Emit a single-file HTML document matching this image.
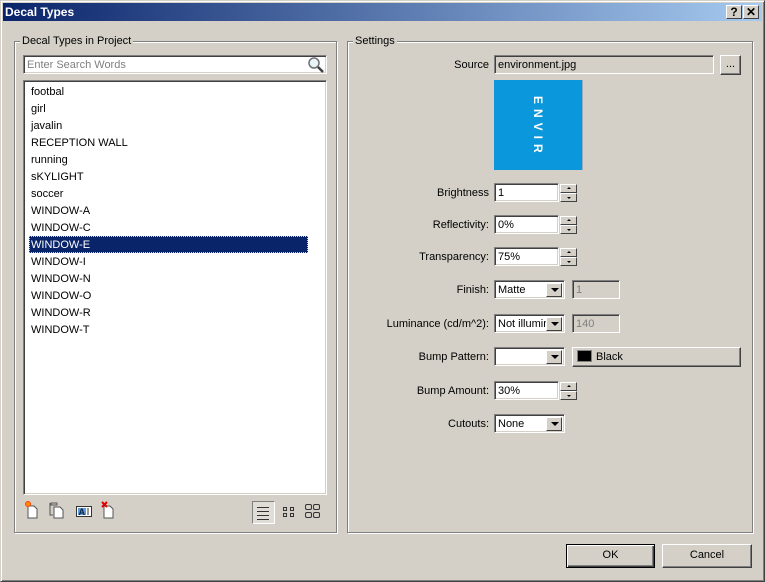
<!DOCTYPE html>
<html><head><style>
*{box-sizing:border-box;margin:0;padding:0}
body{width:765px;height:582px;background:#d4d0c8;font-family:"Liberation Sans",sans-serif;font-size:11px;color:#000;position:relative;overflow:hidden}
.a{position:absolute}
.win{left:0;top:0;width:765px;height:582px;border:1px solid;border-color:#d4d0c8 #404040 #404040 #d4d0c8;box-shadow:inset 1px 1px 0 #fff,inset -1px -1px 0 #808080}
.title{left:3px;top:3px;width:759px;height:18px;background:linear-gradient(to right,#0a246a,#a6caf0);color:#fff;font-weight:bold;font-size:12px;line-height:18px;padding-left:2px}
.tb{width:16px;height:14px;top:5px;background:#d4d0c8;border:1px solid;border-color:#fff #404040 #404040 #fff;font-weight:bold;font-size:12px;line-height:12px;text-align:center;color:#000}
.grp{border:1px solid #808080;box-shadow:1px 1px 0 #fff,inset 1px 1px 0 #fff}
.lbl{background:#d4d0c8;padding:0 2px;line-height:12px}
.sunk{background:#fff;border:1px solid;border-color:#808080 #fff #fff #808080;box-shadow:inset 1px 1px 0 #404040,inset -1px -1px 0 #d4d0c8}
.dis{background:#d4d0c8;color:#808080}
.r{text-align:right;width:200px;line-height:14px}
.txt{line-height:18px;padding-left:3px}
.spin{width:17px;height:18px}
.spin div{width:17px;height:9px;background:#d4d0c8;border:1px solid;border-color:#fff #404040 #404040 #fff;position:relative}
.arr{position:absolute;left:6px;width:0;height:0;border-left:2px solid transparent;border-right:2px solid transparent}
.dd{position:absolute;right:2px;top:2px;width:16px;height:14px;background:#d4d0c8;border:1px solid;border-color:#fff #404040 #404040 #fff}
.dd:after{content:"";position:absolute;left:4px;top:4px;border-left:4px solid transparent;border-right:4px solid transparent;border-top:4px solid #000}
.btn{background:#d4d0c8;border:1px solid;border-color:#fff #404040 #404040 #fff;box-shadow:inset -1px -1px 0 #808080;text-align:center;line-height:21px}
.li{left:31px;line-height:17px}
</style></head><body>
<div class="a win"></div>
<div class="a title">Decal Types</div>
<div class="a tb" style="left:726px">?</div>
<div class="a tb" style="left:743px">✕</div>

<div class="a grp" style="left:14px;top:41px;width:323px;height:492px"></div>
<div class="a lbl" style="left:20px;top:35px">Decal Types in Project</div>
<div class="a sunk" style="left:23px;top:55px;width:304px;height:19px;color:#808080;padding-left:3px;line-height:18px">Enter Search Words</div>
<svg class="a" style="left:307px;top:56px" width="18" height="17"><circle cx="7" cy="7" r="5" fill="#e8f4f8" stroke="#707070" stroke-width="1.5"/><line x1="11" y1="11" x2="16" y2="16" stroke="#404040" stroke-width="2.5"/></svg>
<div class="a sunk" style="left:23px;top:80px;width:304px;height:415px"></div>
<div class="a" style="left:29px;top:236px;width:279px;height:17px;background:#0a246a;outline:1px dotted #d4d0c8;outline-offset:-1px"></div>
<div class="a li" style="top:84px">footbal</div>
<div class="a li" style="top:101px">girl</div>
<div class="a li" style="top:118px">javalin</div>
<div class="a li" style="top:135px">RECEPTION WALL</div>
<div class="a li" style="top:152px">running</div>
<div class="a li" style="top:169px">sKYLIGHT</div>
<div class="a li" style="top:186px">soccer</div>
<div class="a li" style="top:203px">WINDOW-A</div>
<div class="a li" style="top:220px">WINDOW-C</div>
<div class="a li" style="top:237px;color:#fff">WINDOW-E</div>
<div class="a li" style="top:254px">WINDOW-I</div>
<div class="a li" style="top:271px">WINDOW-N</div>
<div class="a li" style="top:288px">WINDOW-O</div>
<div class="a li" style="top:305px">WINDOW-R</div>
<div class="a li" style="top:322px">WINDOW-T</div>

<svg class="a" style="left:24px;top:500px" width="100" height="22">
<path d="M4 6h6l3 3v9H4z" fill="#fff" stroke="#555"/><circle cx="4" cy="4" r="2.5" fill="#f80" stroke="#f40"/>
<path d="M27 3h6v2h-6z M26 3v12h3" fill="none" stroke="#555"/><path d="M30 7h6l3 3v8h-9z" fill="#fff" stroke="#555"/>
<rect x="52.5" y="6.5" width="15" height="10" fill="#fff" stroke="#333"/><rect x="54" y="8" width="8" height="7" fill="#5a9ad8"/><text x="54.5" y="15" font-size="9" font-weight="bold" fill="#124">A</text><path d="M64 8v7" stroke="#333"/>
<path d="M80 6h6l3 3v9h-9z" fill="#fff" stroke="#555"/><path d="M78 2l5 5M83 2l-5 5" stroke="#d00" stroke-width="2"/>
</svg>
<div class="a" style="left:252px;top:501px;width:23px;height:23px;border:1px solid;border-color:#808080 #fff #fff #808080;background:#e0ddd6"></div>
<svg class="a" style="left:254px;top:503px" width="70" height="20">
<path d="M3 4.5h12M3 8.5h12M3 12.5h12M3 16.5h12" stroke="#333"/>
<rect x="29.5" y="4.5" width="3" height="3" fill="none" stroke="#333"/><rect x="36.5" y="4.5" width="3" height="3" fill="none" stroke="#333"/><rect x="29.5" y="10.5" width="3" height="3" fill="none" stroke="#333"/><rect x="36.5" y="10.5" width="3" height="3" fill="none" stroke="#333"/>
<rect x="51.5" y="1.5" width="6" height="5" rx="1.5" fill="none" stroke="#333"/><rect x="59.5" y="1.5" width="6" height="5" rx="1.5" fill="none" stroke="#333"/><rect x="51.5" y="9.5" width="6" height="5" rx="1.5" fill="none" stroke="#333"/><rect x="59.5" y="9.5" width="6" height="5" rx="1.5" fill="none" stroke="#333"/>
</svg>

<div class="a grp" style="left:347px;top:41px;width:406px;height:492px"></div>
<div class="a lbl" style="left:353px;top:35px">Settings</div>

<div class="a r" style="left:289px;top:58px">Source</div>
<div class="a sunk dis txt" style="left:494px;top:55px;width:220px;height:19px;color:#000;background:#d4d0c8">environment.jpg</div>
<div class="a btn" style="left:720px;top:55px;width:21px;height:20px;line-height:16px">...</div>
<div class="a" style="left:494px;top:80px;width:89px;height:90px;background:#0b97dc;border-right:1px solid #9ab"></div>
<div class="a" style="left:531px;top:96px;color:#fff;font-weight:bold;font-size:12px;line-height:14px;writing-mode:vertical-rl;letter-spacing:5px">ENVIR</div>

<div class="a r" style="left:289px;top:186px">Brightness</div>
<div class="a sunk txt" style="left:494px;top:183px;width:65px;height:19px">1</div>
<div class="a spin" style="left:560px;top:184px"><div><i class="arr" style="top:2px;border-bottom:2px solid #000"></i></div><div><i class="arr" style="top:3px;border-top:2px solid #000"></i></div></div>

<div class="a r" style="left:289px;top:218px">Reflectivity:</div>
<div class="a sunk txt" style="left:494px;top:215px;width:65px;height:19px">0%</div>
<div class="a spin" style="left:560px;top:216px"><div><i class="arr" style="top:2px;border-bottom:2px solid #000"></i></div><div><i class="arr" style="top:3px;border-top:2px solid #000"></i></div></div>

<div class="a r" style="left:289px;top:250px">Transparency:</div>
<div class="a sunk txt" style="left:494px;top:247px;width:65px;height:19px">75%</div>
<div class="a spin" style="left:560px;top:248px"><div><i class="arr" style="top:2px;border-bottom:2px solid #000"></i></div><div><i class="arr" style="top:3px;border-top:2px solid #000"></i></div></div>

<div class="a r" style="left:289px;top:283px">Finish:</div>
<div class="a sunk txt" style="left:494px;top:280px;width:71px;height:19px">Matte<span class="dd"></span></div>
<div class="a sunk dis txt" style="left:572px;top:280px;width:48px;height:19px">1</div>

<div class="a r" style="left:289px;top:317px">Luminance (cd/m^2):</div>
<div class="a sunk txt" style="left:494px;top:314px;width:71px;height:19px;white-space:nowrap;overflow:hidden">Not illumin<span class="dd"></span></div>
<div class="a sunk dis txt" style="left:572px;top:314px;width:48px;height:19px">140</div>

<div class="a r" style="left:289px;top:350px">Bump Pattern:</div>
<div class="a sunk txt" style="left:494px;top:347px;width:71px;height:19px"><span class="dd"></span></div>
<div class="a btn" style="left:572px;top:347px;width:169px;height:20px;text-align:left;line-height:18px;padding-left:23px">Black</div>
<div class="a" style="left:577px;top:350px;width:15px;height:12px;background:#000;border:1px solid #808080"></div>

<div class="a r" style="left:289px;top:384px">Bump Amount:</div>
<div class="a sunk txt" style="left:494px;top:381px;width:65px;height:19px">30%</div>
<div class="a spin" style="left:560px;top:382px"><div><i class="arr" style="top:2px;border-bottom:2px solid #000"></i></div><div><i class="arr" style="top:3px;border-top:2px solid #000"></i></div></div>

<div class="a r" style="left:289px;top:417px">Cutouts:</div>
<div class="a sunk txt" style="left:494px;top:414px;width:71px;height:19px">None<span class="dd"></span></div>

<div class="a btn" style="left:566px;top:544px;width:89px;height:24px;border:1px solid #000;box-shadow:inset 1px 1px 0 #fff,inset -1px -1px 0 #404040,inset -2px -2px 0 #808080">OK</div>
<div class="a btn" style="left:662px;top:544px;width:90px;height:24px">Cancel</div>
</body></html>
